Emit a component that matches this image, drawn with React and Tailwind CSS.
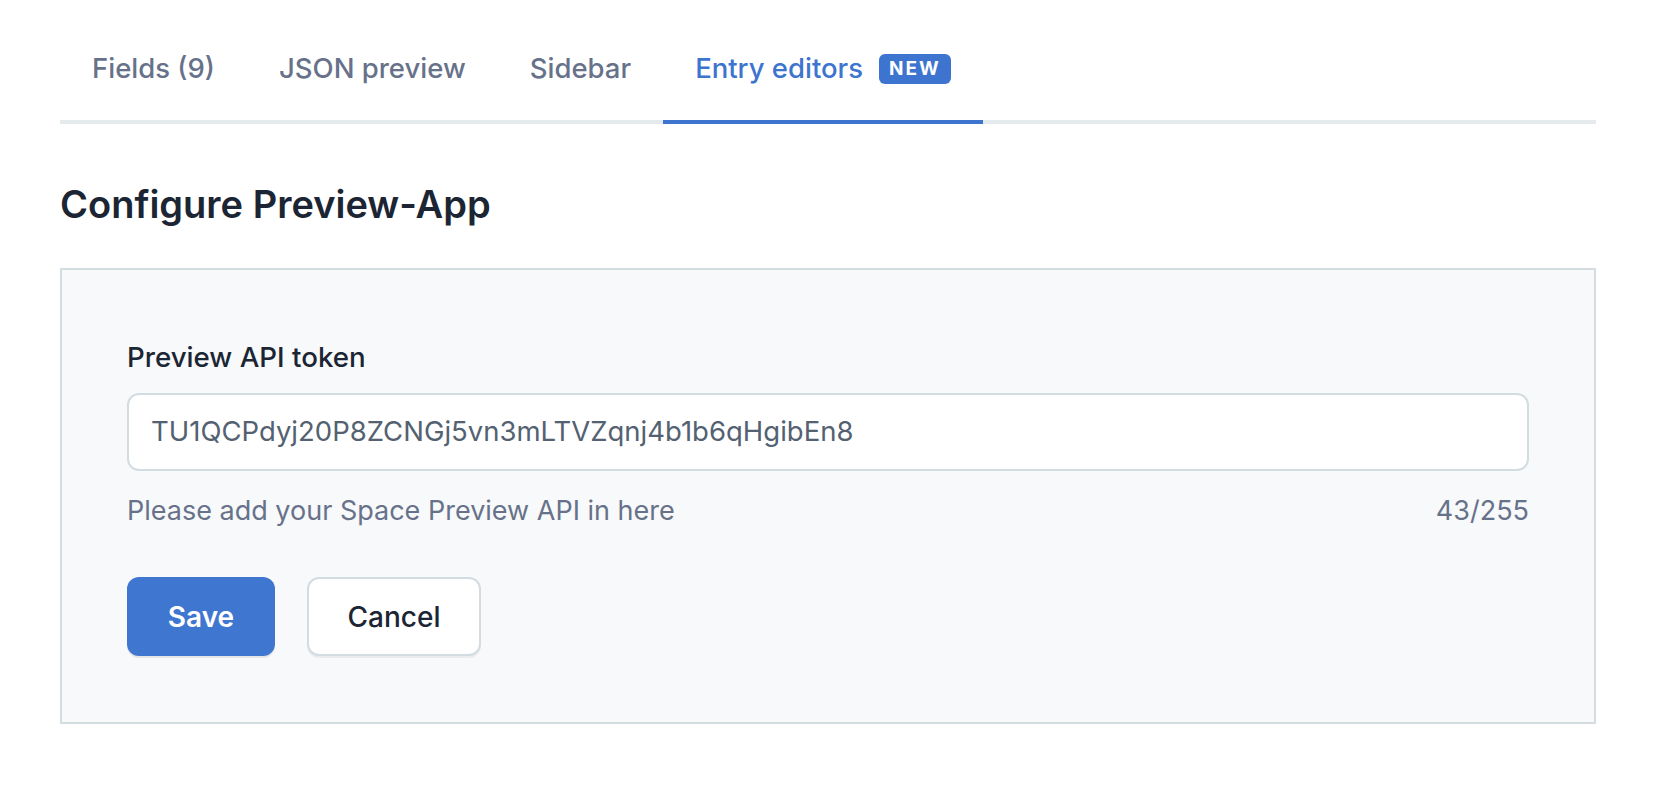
import React from "react";

const tabs = [
  { label: "Fields (9)" },
  { label: "JSON preview" },
  { label: "Sidebar" },
  { label: "Entry editors", active: true, badge: "NEW" },
];

export default function App() {
  return (
    <div className="w-[1662px] h-[786px] bg-white font-['Inter',sans-serif] antialiased overflow-hidden">
      <div className="pl-[60px] pr-[66px]">
        <div className="flex border-b-4 border-[#e5ebed]">
          {tabs.map((t) => (
            <div
              key={t.label}
              className={
                "h-[124px] -mb-[4px] border-b-4 px-8 pt-[18px] flex items-center gap-4 text-[27.5px] font-medium " +
                (t.active
                  ? "border-[#3c74cf] text-[#3c74cf]"
                  : "border-transparent text-[#67728a]")
              }
            >
              <span>{t.label}</span>
              {t.badge && (
                <span className="rounded-[6px] bg-[#3c74cf] text-white text-[19px] font-bold tracking-[2px] px-[10px] h-[30px] flex items-center">
                  {t.badge}
                </span>
              )}
            </div>
          ))}
        </div>

        <h1 className="mt-[56px] text-[38px] leading-[48px] font-semibold text-[#1b2533]">
          Configure Preview-App
        </h1>

        <div className="mt-[40px] border-2 border-[#d3dce0] bg-[#f7f9fa] h-[456px] px-[65px] pt-[67px]">
          <label className="block text-[27.7px] leading-[40px] font-medium text-[#1b2533]">
            Preview API token
          </label>
          <div className="mt-[16px] h-[78px] rounded-[12px] border-2 border-[#d3dce0] bg-white flex items-center px-[22px] text-[27.5px] text-[#536171]">
            TU1QCPdyj20P8ZCNGj5vn3mLTVZqnj4b1b6qHgibEn8
          </div>
          <div className="mt-[20px] flex justify-between text-[27px] leading-[40px] text-[#67728a]">
            <span>Please add your Space Preview API in here</span>
            <span>43/255</span>
          </div>
          <div className="mt-[46px] flex gap-[32px]">
            <button className="h-[79px] w-[148px] rounded-[12px] bg-[#3f77d0] text-white text-[28px] font-semibold shadow-[0_2px_0_rgba(0,0,0,0.08)]">
              Save
            </button>
            <button className="h-[79px] w-[174px] rounded-[12px] border-2 border-[#d3dce0] bg-white text-[#1b2533] text-[28px] font-medium shadow-[0_2px_0_rgba(0,0,0,0.05)]">
              Cancel
            </button>
          </div>
        </div>
      </div>
    </div>
  );
}
